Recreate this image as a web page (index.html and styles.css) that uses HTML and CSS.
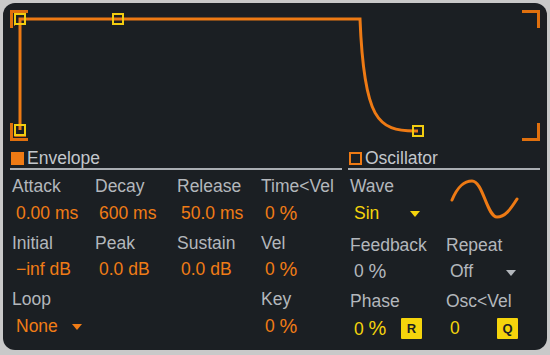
FILE: index.html
```
<!DOCTYPE html>
<html lang="en">
<head>
<meta charset="UTF-8">
<title>Envelope</title>
<link rel="stylesheet" href="styles.css">
</head>
<body>
<div class="panel">
	<!-- envelope display -->
	<svg class="graph" width="530" height="132" viewBox="0 0 530 132">
		<g class="bracket">
			<path d="M1.5 18 V1.5 H18"/>
			<path d="M512 1.5 H528.5 V18"/>
			<path d="M1.5 113 V129.5 H18"/>
			<path d="M512 129.5 H528.5 V113"/>
		</g>
		<g class="bracket-inner">
			<path d="M4.5 16 V4.5 H16"/>
			<path d="M4.5 115 V126.5 H16"/>
		</g>
		<path class="curve" d="M10 120 V9 H350 C354 110 368 121 405 121 H408"/>
		<g class="node">
			<rect x="5" y="4" width="10" height="10"/>
			<rect x="103" y="4" width="10" height="10"/>
			<rect x="5" y="115" width="10" height="10"/>
			<rect x="403" y="116" width="10" height="10"/>
		</g>
	</svg>

	<div class="sections">
		<section class="envelope">
			<div class="head"><span class="mark filled"></span>Envelope</div>
			<div class="grid env-grid">
				<div class="cell"><div class="label">Attack</div><div class="value">0.00 ms</div></div>
				<div class="cell"><div class="label">Decay</div><div class="value">600 ms</div></div>
				<div class="cell"><div class="label">Release</div><div class="value">50.0 ms</div></div>
				<div class="cell"><div class="label">Time&lt;Vel</div><div class="value">0 <span class="pct">%</span></div></div>

				<div class="cell"><div class="label">Initial</div><div class="value">&minus;inf dB</div></div>
				<div class="cell"><div class="label">Peak</div><div class="value">0.0 dB</div></div>
				<div class="cell"><div class="label">Sustain</div><div class="value">0.0 dB</div></div>
				<div class="cell"><div class="label">Vel</div><div class="value">0 <span class="pct">%</span></div></div>

				<div class="cell"><div class="label">Loop</div><div class="value"><span class="pick">None</span><span class="arrow"></span></div></div>
				<div class="cell"></div>
				<div class="cell"></div>
				<div class="cell"><div class="label">Key</div><div class="value">0 <span class="pct">%</span></div></div>
			</div>
		</section>

		<section class="osc">
			<div class="head"><span class="mark"></span>Oscillator</div>
			<div class="grid osc-grid">
				<div class="cell"><div class="label">Wave</div><div class="value yellow"><span class="pick">Sin</span><span class="arrow"></span></div></div>
				<div class="cell wave-cell">
					<svg width="72" height="42" viewBox="0 0 72 42">
						<path class="sine" d="M2 21 C8 7 14 2 22 2 C33 2 37 38 47 38 C55 38 60 31 67 20"/>
					</svg>
				</div>

				<div class="cell"><div class="label">Feedback</div><div class="value grey">0 <span class="pct">%</span></div></div>
				<div class="cell"><div class="label">Repeat</div><div class="value grey"><span class="pick">Off</span><span class="arrow"></span></div></div>

				<div class="cell"><div class="label">Phase</div><div class="value yellow"><span class="num">0 <span class="pct">%</span></span><span class="btn">R</span></div></div>
				<div class="cell"><div class="label">Osc&lt;Vel</div><div class="value yellow"><span class="num">0</span><span class="btn">Q</span></div></div>
			</div>
		</section>
	</div>
</div>
</body>
</html>
```

FILE: styles.css
```
body {
	margin: 0;
	background: #c9c9c9;
	font-family: "Liberation Sans", Arial, sans-serif;
}
.panel {
	margin: 3px;
	width: 544px;
	height: 347px;
	box-sizing: border-box;
	padding: 7px 7px 0 7px;
	background: #1b1f23;
	border-radius: 12px;
}
.graph {
	display: block;
}
.bracket path {
	fill: none;
	stroke: #e0700e;
	stroke-width: 3;
}
.bracket-inner path {
	fill: none;
	stroke: #c8620c;
	stroke-width: 1;
}
.curve {
	fill: none;
	stroke: #ee7a14;
	stroke-width: 3;
}
.node rect {
	fill: none;
	stroke: #f2cc10;
	stroke-width: 2;
}

.sections {
	display: flex;
	gap: 6px;
	margin-top: 6px;
}
.envelope {
	width: 332px;
}
.osc {
	width: 192px;
}
.head {
	display: flex;
	align-items: center;
	height: 20px;
	border-bottom: 2px solid #a9adb2;
	color: #c3c7cc;
	font-size: 17.5px;
	padding-left: 1px;
}
.mark {
	width: 13px;
	height: 13px;
	box-sizing: border-box;
	border: 2px solid #ee7a14;
	margin-right: 3px;
}
.mark.filled {
	background: #ee7a14;
}

.grid {
	display: grid;
	row-gap: 7.5px;
	padding: 5px 0 0 2px;
	font-size: 17.5px;
}
.env-grid {
	grid-template-columns: 83px 82px 84px 1fr;
}
.osc-grid {
	grid-template-columns: 96px 1fr;
}
.label {
	height: 22px;
	line-height: 22px;
	color: #b3b7bc;
}
.value {
	display: flex;
	align-items: center;
	height: 22px;
	margin-top: 5px;
	padding-left: 4px;
	color: #f07c16;
	white-space: pre;
}
.pct {
	font-size: 20px;
}
.value.yellow {
	color: #f5d40c;
}
.value.grey {
	color: #b3b7bc;
}
.pick {
	width: 56px;
}
.arrow {
	width: 0;
	height: 0;
	border-left: 5px solid transparent;
	border-right: 5px solid transparent;
	border-top: 6px solid currentColor;
	margin-top: 2px;
}
.num {
	width: 47px;
}
.btn {
	width: 21px;
	height: 21px;
	background: #f5d40c;
	color: #1b1f23;
	font-size: 13px;
	font-weight: bold;
	text-align: center;
	line-height: 21px;
	border-radius: 1px;
}
.wave-cell {
	padding: 4px 0 0 4px;
}
.sine {
	fill: none;
	stroke: #ee7a14;
	stroke-width: 3;
	stroke-linecap: round;
}
```
